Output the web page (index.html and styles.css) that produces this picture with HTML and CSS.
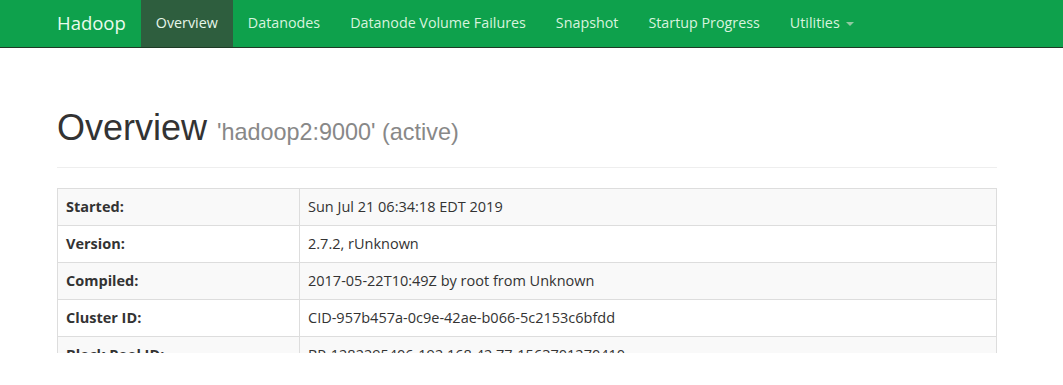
FILE: index.html
```html
<!DOCTYPE html>
<html lang="en">
<head>
    <meta charset="UTF-8">
    <meta name="viewport" content="width=device-width, initial-scale=1.0">
    <title>Namenode information</title>
    <link rel="stylesheet" href="styles.css">
</head>
<body>
    <div class="page">
        <header class="navbar">
            <div class="container nav-inner">
                <a class="brand" href="#">Hadoop</a>
                <ul class="nav">
                    <li class="active"><a href="#">Overview</a></li>
                    <li><a href="#">Datanodes</a></li>
                    <li><a href="#">Datanode Volume Failures</a></li>
                    <li><a href="#">Snapshot</a></li>
                    <li><a href="#">Startup Progress</a></li>
                    <li><a href="#">Utilities <span class="caret"></span></a></li>
                </ul>
            </div>
        </header>

        <div class="container">
            <div class="page-header">
                <h1>Overview <small>'hadoop2:9000' (active)</small></h1>
            </div>

            <table class="info-table">
                <tr><th>Started:</th><td>Sun Jul 21 06:34:18 EDT 2019</td></tr>
                <tr><th>Version:</th><td>2.7.2, rUnknown</td></tr>
                <tr><th>Compiled:</th><td>2017-05-22T10:49Z by root from Unknown</td></tr>
                <tr><th>Cluster ID:</th><td>CID-957b457a-0c9e-42ae-b066-5c2153c6bfdd</td></tr>
                <tr><th>Block Pool ID:</th><td>BP-1282295406-192.168.42.77-1563701270410</td></tr>
            </table>
        </div>
    </div>
</body>
</html>
```

FILE: styles.css
```css
body {
    margin: 0;
    font-family: "Open Sans", "Noto Sans", sans-serif;
    font-size: 14px;
    color: #333;
    background-color: #fff;
}

.page {
    height: 353px;
    overflow: hidden;
}

.container {
    width: 940px;
    margin-left: 57px;
}

.navbar {
    height: 47px;
    background-color: #0ea14c;
    border-bottom: 1px solid #1f3a26;
}

.nav-inner {
    display: flex;
    align-items: stretch;
    height: 47px;
}

.brand {
    margin-left: -15px;
    padding: 0 15px 2px;
    display: flex;
    align-items: center;
    font-size: 18.5px;
    color: #eafbee;
    text-decoration: none;
}

.nav {
    display: flex;
    list-style: none;
    margin: 0;
    padding: 0;
}

.nav li a {
    display: flex;
    align-items: center;
    height: 45px;
    padding: 0 15px 2px;
    font-size: 14.3px;
    color: #d8f3de;
    text-decoration: none;
}

.nav li.active a {
    background-color: #2e5e3e;
    color: #e6f7ea;
}

.caret {
    display: inline-block;
    width: 0;
    height: 0;
    margin-left: 6px;
    margin-top: 2px;
    border-top: 4px solid #8fc9a0;
    border-left: 4px solid transparent;
    border-right: 4px solid transparent;
}

.page-header {
    margin: 60px 0 20px;
    padding-bottom: 9px;
    border-bottom: 1px solid #eee;
}

.page-header h1 {
    margin: 0 0 10px;
    font-family: "Liberation Sans", Arial, sans-serif;
    font-size: 36px;
    font-weight: 500;
    line-height: 1.1;
    color: #333;
}

.page-header h1 small {
    font-size: 65%;
    font-weight: normal;
    color: #888;
}

.info-table {
    width: 100%;
    border-collapse: collapse;
    border: 1px solid #ddd;
    font-size: 14.5px;
}

.info-table th,
.info-table td {
    padding: 8px;
    line-height: 20px;
    text-align: left;
    border: 1px solid #ddd;
}

.info-table th {
    width: 225px;
    font-weight: bold;
}

.info-table tr:nth-child(odd) {
    background-color: #f9f9f9;
}
```
